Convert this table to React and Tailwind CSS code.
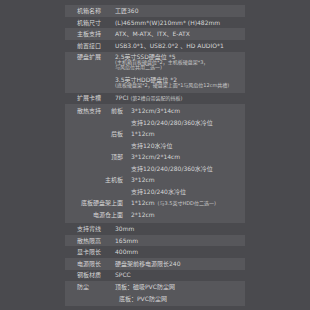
import React from 'react';

const band = 'bg-[#57575b]';

// simple one-line spec row
function Row({ label, value, light, className = '' }) {
  return (
    <div className={`flex h-[11.6px] items-center ${light ? band : ''} ${className}`}>
      <div className="w-[50px] shrink-0 pl-[12px]">{label}</div>
      <div className="whitespace-nowrap">{value}</div>
    </div>
  );
}

const cooling = [
  ['前板', '3*12cm/3*14cm'],
  ['', '支持120/240/280/360水冷位'],
  ['后板', '1*12cm'],
  ['', '支持120水冷位'],
  ['顶部', '3*12cm/2*14cm'],
  ['', '支持120/240/280/360水冷位'],
  ['主机板', '3*12cm'],
  ['', '支持120/240水冷位'],
  ['底板硬盘架上面', '1*12cm', '(与3.5英寸HDD位二选一)'],
  ['电源仓上面', '2*12cm'],
];

export default function App() {
  return (
    <div className="h-[310px] w-[310px] overflow-hidden bg-[#4a4a4e] pt-[5.2px] font-['DejaVu_Sans','Noto_Sans_CJK_SC',sans-serif] text-[6px] leading-none text-[#d6d6d6]">
      <div className="ml-[65px] w-[180px]">
        <Row label="机箱名称" value="工匠360" light />
        <Row label="机箱尺寸" value="(L)465mm*(W)210mm* (H)482mm" />
        <Row label="主板支持" value="ATX、M-ATX、ITX、E-ATX" light />
        <Row label="前置接口" value="USB3.0*1、USB2.0*2 、HD AUDIO*1" />

        {/* 硬盘扩展 */}
        <div className={`flex h-[41.1px] ${band}`}>
          <div className="w-[50px] shrink-0 pl-[12px] pt-[1.9px]">
            <div className="flex h-[7px] items-center">硬盘扩展</div>
          </div>
          <div className="flex flex-col whitespace-nowrap pt-[1.9px]">
            <div className="flex h-[7px] items-center">2.5英寸SSD硬盘位 *5</div>
            <div className="flex h-[5px] items-center text-[5px] text-[#c8c8c8]">(主机箱背板硬盘位*2，主机板硬盘架*3，</div>
            <div className="flex h-[5px] items-center text-[5px] text-[#c8c8c8]">与风扇位共用二选一)</div>
            <div className="mt-[6px] flex h-[7px] items-center">3.5英寸HDD硬盘位 *2</div>
            <div className="flex h-[5px] items-center text-[5px] text-[#c8c8c8]">(底板硬盘架*2，硬盘架上面*1与风扇位12cm共槽)</div>
          </div>
        </div>

        <div className="flex h-[11.6px] items-center">
          <div className="w-[50px] shrink-0 pl-[12px]">扩展卡槽</div>
          <div className="flex items-baseline whitespace-nowrap">
            7PCI<span className="ml-[2px] text-[5px] text-[#c8c8c8]">(第2槽自带装配的挡板)</span>
          </div>
        </div>

        {/* 散热支持 */}
        <div className={`pb-[2.5px] pt-[1px] ${band}`}>
          {cooling.map(([sub, val, note], i) => (
            <div key={i} className="flex h-[11.55px] items-center">
              <div className="flex w-[58px] shrink-0 items-center justify-between">
                <span className="pl-[12px]">{i === 0 ? '散热支持' : ''}</span>
                <span className="whitespace-nowrap">{sub}</span>
              </div>
              <div className="ml-[8px] flex items-baseline whitespace-nowrap">
                {val}
                {note && <span className="ml-[3px] text-[5px] text-[#c8c8c8]">{note}</span>}
              </div>
            </div>
          ))}
        </div>

        <Row label="支持背线" value="30mm" />
        <Row label="散热限高" value="165mm" light />
        <Row label="显卡限长" value="400mm" />
        <Row label="电源限长" value="硬盘架前移电源限长240" light />
        <Row label="钢板材质" value="SPCC" />

        {/* 防尘 */}
        <div className={`flex pb-[2px] pt-[0.5px] ${band}`}>
          <div className="w-[50px] shrink-0 pl-[12px]">
            <div className="flex h-[11.3px] items-center">防尘</div>
          </div>
          <div className="flex flex-col whitespace-nowrap">
            <div className="flex h-[11.3px] items-center">顶板：磁吸PVC防尘网</div>
            <div className="flex h-[11.3px] items-center pl-[4px]">底板：PVC防尘网</div>
          </div>
        </div>
      </div>
    </div>
  );
}
